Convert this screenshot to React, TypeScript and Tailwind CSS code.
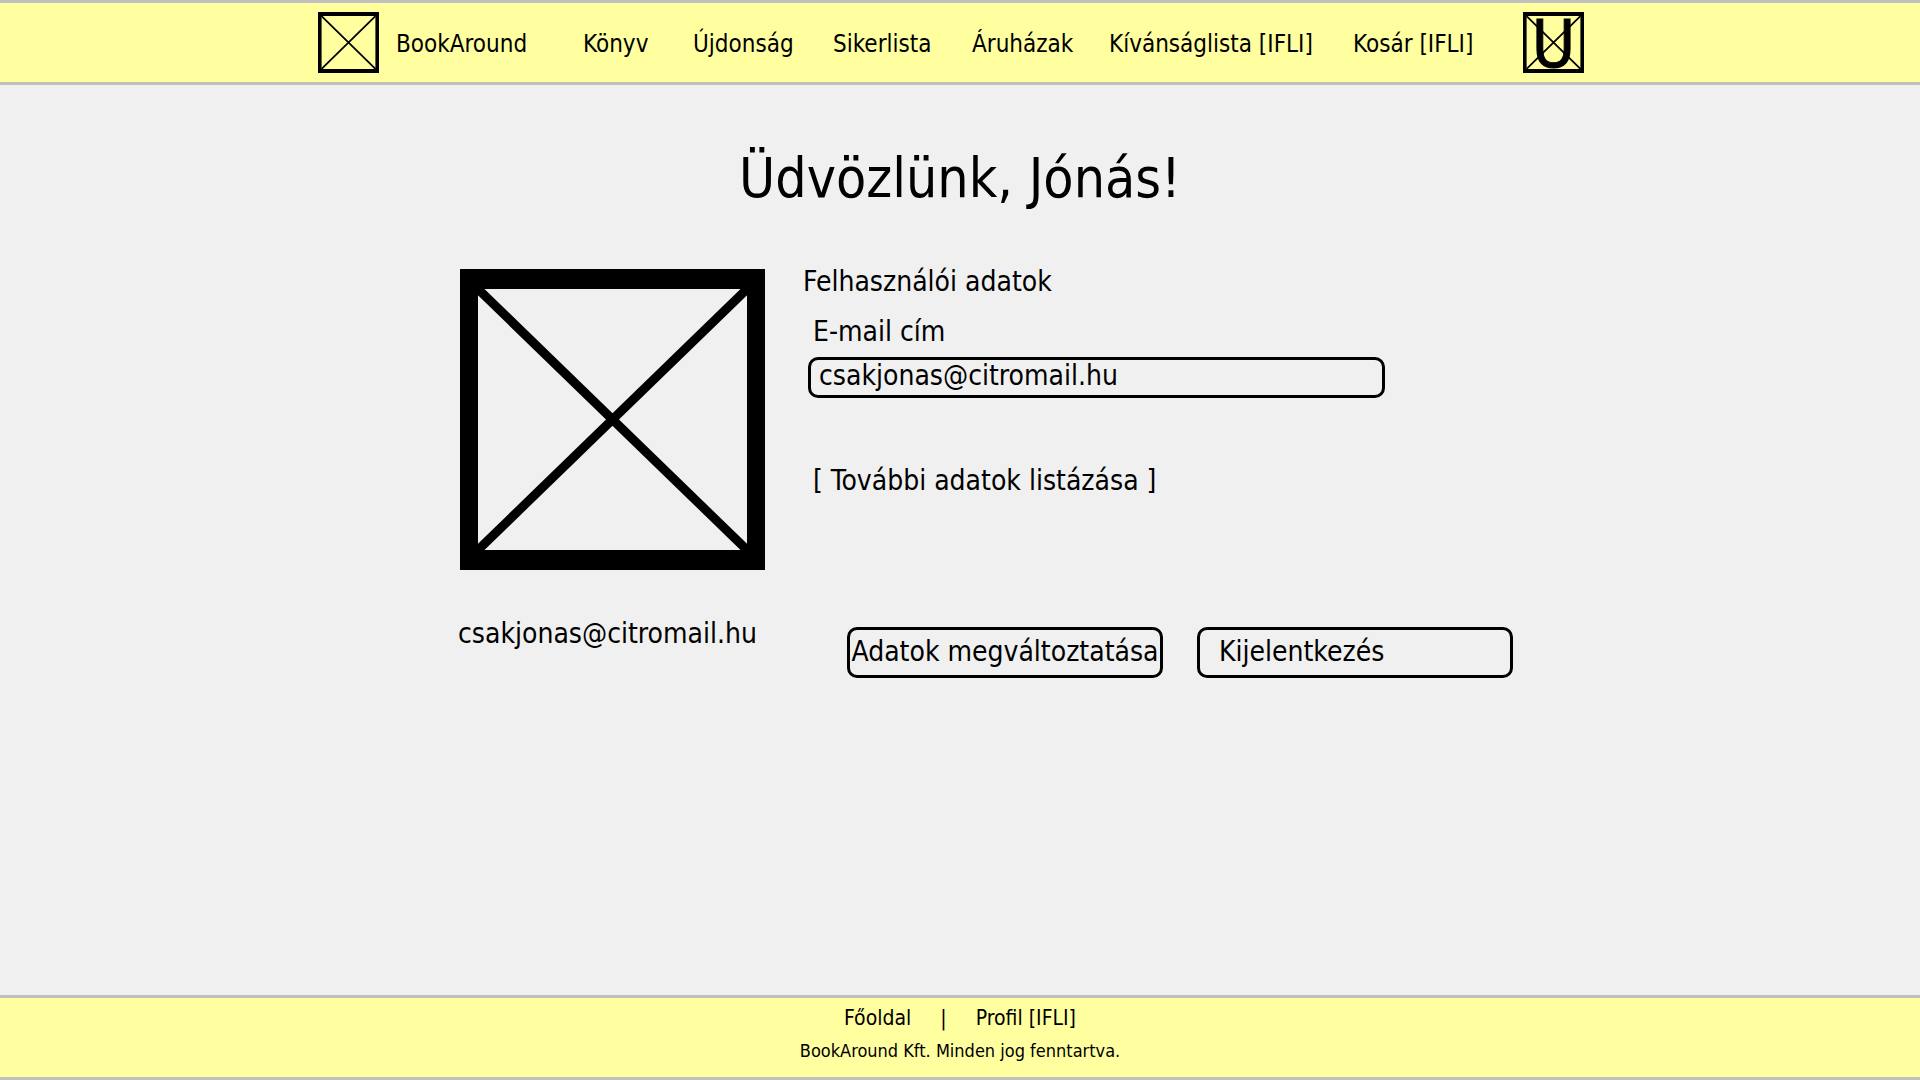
import type { ReactNode } from "react";

function CrossedBox({ className, label }: { className: string; label: string }) {
  return (
    <svg viewBox="0 0 305 301" preserveAspectRatio="none" role="img" aria-label={label} className={className}>
      <path fillRule="evenodd" d="M0 0H305V301H0ZM18 20V281H287V20Z" fill="#000" />
      <path d="M18 20L287 281M287 20L18 281" stroke="#000" strokeWidth="9" />
    </svg>
  );
}

function NavLink({ children }: { children: ReactNode }) {
  return (
    <a href="#" className="pt-0.5 whitespace-nowrap">
      {children}
    </a>
  );
}

const navItems = ["BookAround", "Könyv", "Újdonság", "Sikerlista", "Áruházak", "Kívánságlista [IFLI]", "Kosár [IFLI]"];

export default function App() {
  return (
    <div className="flex min-h-screen flex-col bg-[#f0f0f0] font-['DejaVu_Sans_Condensed','DejaVu_Sans',sans-serif] text-black">
      <header className="flex justify-center border-y-[3px] border-[#c0c0c0] bg-[#ffffa0] py-[9px] pr-[18px]">
        <nav className="grid grid-cols-[78px_187px_110px_140px_139px_137px_244px_170px_61px] items-center text-2xl">
          <a href="#">
            <CrossedBox className="size-[61px]" label="Logó" />
          </a>
          {navItems.map((item) => (
            <NavLink key={item}>{item}</NavLink>
          ))}
          <a href="#" className="grid size-[61px] place-items-center">
            <CrossedBox className="col-start-1 row-start-1 size-[61px]" label="Profil" />
            <span className="col-start-1 row-start-1 pt-1 text-[66px] leading-[57px] [-webkit-text-stroke:1px_black]">U</span>
          </a>
        </nav>
      </header>

      <main className="flex-1 pt-[59px]">
        <h1 className="text-center text-[55px] leading-[68px]">Üdvözlünk, Jónás!</h1>

        <div className="mt-[52px] flex justify-center pl-[51px] text-[28px] leading-9">
          <div className="grid w-full max-w-[1055px] grid-cols-[345px_1fr]">
            <section className="pt-[5px]">
              <CrossedBox className="ml-0.5 h-[301px] w-[305px]" label="Profilkép" />
              <p className="mt-[46px]">csakjonas@citromail.hu</p>
            </section>

            <section>
              <h2>Felhasználói adatok</h2>
              <label htmlFor="email" className="mt-3.5 block pl-2.5">
                E-mail cím
              </label>
              <input
                id="email"
                type="email"
                defaultValue="csakjonas@citromail.hu"
                className="mt-[7px] ml-[5px] block h-[41px] w-[577px] rounded-[10px] border-[3px] border-black bg-transparent px-2 pb-1 outline-none"
              />
              <button type="button" className="mt-[65px] ml-2.5 block">
                [ További adatok listázása ]
              </button>
              <div className="mt-32 ml-11 grid grid-cols-2 gap-[34px]">
                <button type="button" className="h-[51px] rounded-[10px] border-[3px] border-black pb-0.5 whitespace-nowrap">
                  Adatok megváltoztatása
                </button>
                <button type="button" className="h-[51px] rounded-[10px] border-[3px] border-black pb-0.5 pl-[19px] text-left">
                  Kijelentkezés
                </button>
              </div>
            </section>
          </div>
        </div>
      </main>

      <footer className="flex h-[85px] flex-col items-center border-y-[3px] border-[#c0c0c0] bg-[#ffffa0] pt-2">
        <div className="flex gap-[29px] text-[21px] leading-6">
          <a href="#">Főoldal</a>
          <span>|</span>
          <a href="#">Profil [IFLI]</a>
        </div>
        <p className="mt-[9px] text-lg leading-6">BookAround Kft. Minden jog fenntartva.</p>
      </footer>
    </div>
  );
}
